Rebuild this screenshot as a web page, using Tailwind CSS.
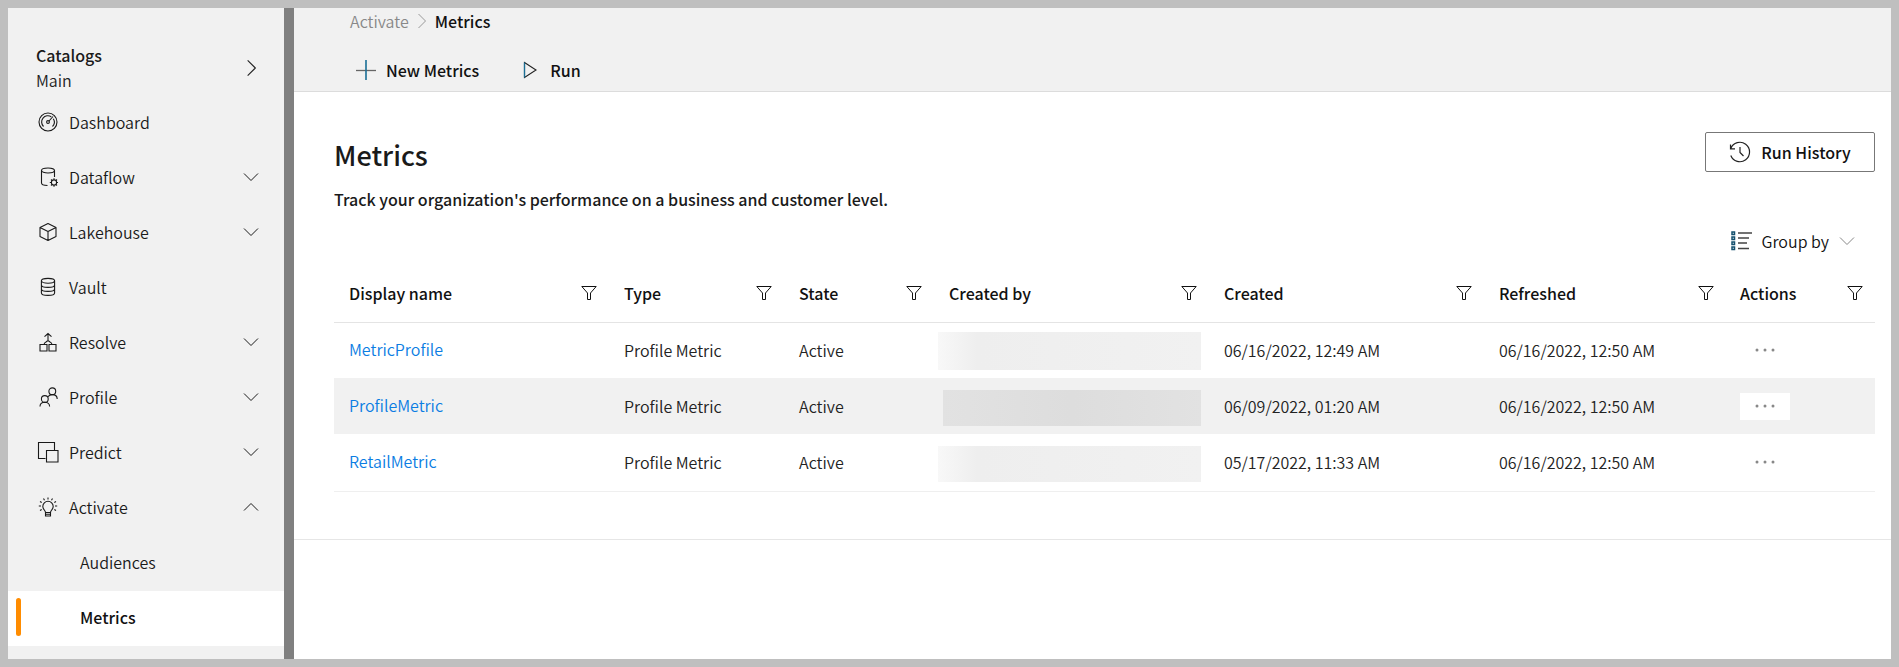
<!DOCTYPE html>
<html lang="en">
<head>
<meta charset="utf-8">
<meta name="viewport" content="width=device-width, initial-scale=1">
<title>Metrics</title>
<script src="https://cdn.jsdelivr.net/npm/@tailwindcss/browser@4"></script>
</head>
<body class="flex min-h-screen border-8 border-[#bfbfbf] bg-white font-['Noto_Sans_CJK_SC',sans-serif] text-base leading-6 font-[350] text-[#222]">

<!-- Shared icons -->
<svg class="hidden" aria-hidden="true">
  <symbol id="down" viewBox="0 0 16 10"><path d="M1 1.500l7 7 7-7" fill="none" stroke="currentColor"/></symbol>
  <symbol id="right" viewBox="0 0 10 16"><path d="M1.500 1l7 7-7 7" fill="none" stroke="currentColor"/></symbol>
  <symbol id="filter" viewBox="0 0 16 16"><path d="M.8 1.500h14.400L9.500 8v6.500h-3V8z" fill="none" stroke="currentColor"/></symbol>
  <symbol id="dots" viewBox="0 0 20 4"><g fill="currentColor"><circle cx="2" cy="2" r="1.500"/><circle cx="10" cy="2" r="1.500"/><circle cx="18" cy="2" r="1.500"/></g></symbol>
</svg>

<aside class="w-[276px] shrink-0 bg-[#f1f1f1]">
  <button type="button" class="flex h-[88px] w-full items-center justify-between pt-8 pr-[26px] pl-7 text-left leading-[25px]">
    <span><span class="block font-medium text-[#1a1a1a]">Catalogs</span><span class="block">Main</span></span>
    <svg class="mr-px h-[18px] w-[11px]"><use href="#right"/></svg>
  </button>
  <nav aria-label="Catalog" class="text-[#1a1a1a]">
    <a href="#" class="flex h-[55px] items-center gap-[11px] pr-[25px] pb-[3px] pl-[30px]">
      <svg class="size-5 shrink-0" viewBox="0 0 20 20" fill="none" stroke="currentColor" stroke-width="1.100"><circle cx="10" cy="10" r="9"/><path d="M5.500 14.500a6.300 6.300 0 0 1 7.800-9.800M15.300 6.800a6.300 6.300 0 0 1-.8 7.700M11 9l4-4.500"/><circle cx="10" cy="10" r="1.400"/></svg>
      <span>Dashboard</span>
    </a>
    <button type="button" class="flex h-[55px] w-full items-center gap-[11px] pr-[25px] pb-[3px] pl-[30px]">
      <svg class="size-5 shrink-0" viewBox="0 0 20 20" fill="none" stroke="currentColor" stroke-width="1.100"><ellipse cx="10" cy="3.500" rx="6.500" ry="2.500"/><path d="M3.500 3.500v12.500c0 1.300 2.600 2.400 6 2.500M16.500 3.500v6.500"/><circle cx="16" cy="15.500" r="2.600"/><path d="M16 11.300v1.500M16 18.200v1.500M11.800 15.500h1.500M18.700 15.500h1.500M13 12.500l1.100 1.100M17.900 17.400l1.100 1.100M13 18.500l1.100-1.100M17.900 13.600l1.100-1.100"/></svg>
      <span class="flex-1 text-left">Dataflow</span>
      <svg class="h-[10px] w-4"><use href="#down"/></svg>
    </button>
    <button type="button" class="flex h-[55px] w-full items-center gap-[11px] pr-[25px] pb-[3px] pl-[30px]">
      <svg class="size-5 shrink-0" viewBox="0 0 20 20" fill="none" stroke="currentColor" stroke-width="1.100" stroke-linejoin="round"><path d="M10 1.500l8 4v9l-8 4-8-4v-9zM2 5.500l8 4 8-4M10 9.500v9"/></svg>
      <span class="flex-1 text-left">Lakehouse</span>
      <svg class="h-[10px] w-4"><use href="#down"/></svg>
    </button>
    <a href="#" class="flex h-[55px] items-center gap-[11px] pr-[25px] pb-[3px] pl-[30px]">
      <svg class="size-5 shrink-0" viewBox="0 0 20 20" fill="none" stroke="currentColor" stroke-width="1.100"><ellipse cx="10" cy="3.800" rx="6.600" ry="2.400"/><path d="M3.400 3.800v12.200c0 1.300 3 2.400 6.600 2.400s6.600-1.100 6.600-2.400V3.800M3.400 8c0 1.300 3 2.400 6.600 2.400s6.600-1.100 6.600-2.400M3.400 12c0 1.300 3 2.400 6.600 2.400s6.600-1.100 6.600-2.400"/></svg>
      <span>Vault</span>
    </a>
    <button type="button" class="flex h-[55px] w-full items-center gap-[11px] pr-[25px] pb-[3px] pl-[30px]">
      <svg class="size-5 shrink-0" viewBox="0 0 20 20" fill="none" stroke="currentColor" stroke-width="1.100"><path d="M2 12.500h7v6.500H2zM11 12.500h7v6.500h-7zM10 1.500V8.500M6.500 4.700L10 1.500l3.500 3.200M6 12.500c.2-1.500.8-2 2-2.500l2-1.500 2 1.500c1.200.5 1.800 1 2 2.500"/></svg>
      <span class="flex-1 text-left">Resolve</span>
      <svg class="h-[10px] w-4"><use href="#down"/></svg>
    </button>
    <button type="button" class="flex h-[55px] w-full items-center gap-[11px] pr-[25px] pb-[3px] pl-[30px]">
      <svg class="size-5 shrink-0" viewBox="0 0 20 20" fill="none" stroke="currentColor" stroke-width="1.100"><circle cx="14.300" cy="4.300" r="3.400"/><circle cx="6.800" cy="12" r="3.400"/><path d="M2 19.500c0-2.500 2-4.200 4.800-4.200s4.800 1.700 4.800 4.200M10 9.800c.9-1.400 2.500-2.200 4.300-2.200 2.900 0 4.900 1.900 4.900 4.400"/></svg>
      <span class="flex-1 text-left">Profile</span>
      <svg class="h-[10px] w-4"><use href="#down"/></svg>
    </button>
    <button type="button" class="flex h-[55px] w-full items-center gap-[11px] pr-[25px] pb-[3px] pl-[30px]">
      <svg class="size-5 shrink-0 overflow-visible" viewBox="0 0 20 20" fill="none" stroke="currentColor" stroke-width="1.100"><path d="M7.500 16.500h-7v-16h16v7.500M8.500 8.500h11.500v11.500H8.500z"/></svg>
      <span class="flex-1 text-left">Predict</span>
      <svg class="h-[10px] w-4"><use href="#down"/></svg>
    </button>
    <button type="button" aria-expanded="true" class="flex h-[55px] w-full items-center gap-[11px] pr-[25px] pb-[3px] pl-[30px]">
      <svg class="size-5 shrink-0" viewBox="0 0 20 20" fill="none" stroke="currentColor" stroke-width="1.100"><path d="M7.500 15.500c0-2-2.700-3.200-2.700-6a5.200 5.200 0 0 1 10.400 0c0 2.800-2.700 4-2.700 6zM7.500 15.500v3.500h5v-3.500M7.500 17.300h5M10 .5v2M5.500 1.500l1 1.700M14.500 1.500l-1 1.700M2 4.500l1.700 1M18 4.500l-1.700 1M.8 9h2.200M17 9h2.200M2 13.500l1.700-1M18 13.500l-1.700-1"/></svg>
      <span class="flex-1 text-left">Activate</span>
      <svg class="h-[10px] w-4 rotate-180"><use href="#down"/></svg>
    </button>
    <a href="#" class="flex h-[55px] items-center pb-[3px] pl-[72px]">Audiences</a>
    <a href="#" aria-current="page" class="flex h-[55px] items-center bg-white pb-[3px] pl-2 font-medium text-[#111]">
      <span class="mr-[59px] h-[38px] w-[5px] rounded-sm bg-[#ff8c00]"></span>Metrics
    </a>
  </nav>
</aside>
<div class="w-[10px] shrink-0 bg-[#808080]"></div>

<main class="min-w-0 flex-1">
  <header class="h-[84px] border-b border-[#dcdcdc] bg-[#f1f1f1] pl-14">
    <nav aria-label="Breadcrumb" class="flex items-center gap-2 pt-px">
      <a href="#" class="text-[#888]">Activate</a>
      <svg class="h-4 w-[10px] text-[#999]"><use href="#right"/></svg>
      <span class="font-medium text-[#111]">Metrics</span>
    </nav>
    <div class="mt-[25px] flex items-center gap-[43px] pl-1.5 font-medium text-[#111]">
      <button type="button" class="flex items-center gap-2.5">
        <svg class="size-5" viewBox="0 0 20 20"><path d="M0 10.500h20" stroke="#666" stroke-width="1.300"/><path d="M10 0v20" stroke="#1a6f96" stroke-width="1.600"/></svg>New Metrics
      </button>
      <button type="button" class="flex items-center gap-3">
        <svg class="h-[18px] w-4" viewBox="0 0 16 18" fill="none"><path d="M2.500 1.500L14 9 2.500 16.500z" stroke="#222" stroke-width="1.100"/><path d="M2.500 1.500v15" stroke="#1a6f96" stroke-width="1.300"/></svg>Run
      </button>
    </div>
  </header>

  <section class="border-b border-[#e6e6e6] pt-10 pr-4 pb-[47px] pl-10">
    <div class="flex items-start justify-between">
      <div>
        <h1 class="mt-[3px] text-[27px] leading-10 font-medium text-[#1a1a1a]">Metrics</h1>
        <p class="mt-3 font-medium text-[#1a1a1a]">Track your organization's performance on a business and customer level.</p>
      </div>
      <button type="button" class="flex h-10 w-[170px] items-center justify-center gap-2.5 rounded-xs border border-[#777] font-medium text-[#111]">
        <svg class="size-[22px]" viewBox="0 0 22 22" fill="none" stroke="#222" stroke-width="1.200"><path d="M1.800 7.500A9.700 9.700 0 1 1 1.800 14.500M1.500 3.500v4.300h4.500M11 6v5.500l3.500 3.500"/></svg>Run History
      </button>
    </div>
    <div class="mt-[18px] flex justify-end pr-5">
      <button type="button" class="flex items-center gap-2.5 text-[#111]">
        <svg class="h-5 w-[21px]" viewBox="0 0 21 20" fill="none"><path d="M7 2h14M7 7h11M7 12h9M7 17.500h11" stroke="#444" stroke-width="1.300"/><path d="M1 1h2.500v2.500H1zM1 6h2.500v2.500H1zM1 11h2.500v2.500H1zM1 16h2.500v2.500H1z" stroke="#14506e" stroke-width="1.500"/></svg>
        Group by
        <svg class="h-[10px] w-4 text-[#888]"><use href="#down"/></svg>
      </button>
    </div>
    <table class="mt-3 w-full table-fixed text-left">
      <colgroup><col class="w-[275px]"><col class="w-[175px]"><col class="w-[150px]"><col class="w-[275px]"><col class="w-[275px]"><col class="w-[242px]"><col class="w-[149px]"></colgroup>
      <thead class="text-[#111]">
        <tr class="h-[57px] border-b border-[#e4e4e4]">
          <th scope="col" class="pr-3 pl-[15px] font-medium"><div class="flex items-center justify-between">Display name<button type="button" aria-label="Filter Display name"><svg class="size-4"><use href="#filter"/></svg></button></div></th>
          <th scope="col" class="pr-3 pl-[15px] font-medium"><div class="flex items-center justify-between">Type<button type="button" aria-label="Filter Type"><svg class="size-4"><use href="#filter"/></svg></button></div></th>
          <th scope="col" class="pr-3 pl-[15px] font-medium"><div class="flex items-center justify-between">State<button type="button" aria-label="Filter State"><svg class="size-4"><use href="#filter"/></svg></button></div></th>
          <th scope="col" class="pr-3 pl-[15px] font-medium"><div class="flex items-center justify-between">Created by<button type="button" aria-label="Filter Created by"><svg class="size-4"><use href="#filter"/></svg></button></div></th>
          <th scope="col" class="pr-3 pl-[15px] font-medium"><div class="flex items-center justify-between">Created<button type="button" aria-label="Filter Created"><svg class="size-4"><use href="#filter"/></svg></button></div></th>
          <th scope="col" class="pr-3 pl-[15px] font-medium"><div class="flex items-center justify-between">Refreshed<button type="button" aria-label="Filter Refreshed"><svg class="size-4"><use href="#filter"/></svg></button></div></th>
          <th scope="col" class="pr-3 pl-[14px] font-medium"><div class="flex items-center justify-between">Actions<button type="button" aria-label="Filter Actions"><svg class="size-4"><use href="#filter"/></svg></button></div></th>
        </tr>
      </thead>
      <tbody>
        <tr class="h-14">
          <td class="pb-0.5 pl-[15px]"><a href="#" class="text-[#0b7de3]">MetricProfile</a></td>
          <td class="pl-[15px]">Profile Metric</td>
          <td class="pl-[15px]">Active</td>
          <td class="pt-px pr-2 pl-1"><div class="h-[38px] bg-linear-to-r from-[#f8f8f8] via-[#eeeeee] via-15% to-[#f1f1f1]"></div></td>
          <td class="pl-[15px]">06/16/2022, 12:49 AM</td>
          <td class="pl-[15px]">06/16/2022, 12:50 AM</td>
          <td class="pl-[14px]"><button type="button" aria-label="More actions for MetricProfile" class="flex h-[27px] w-[50px] items-center justify-center text-[#888]"><svg class="h-1 w-5"><use href="#dots"/></svg></button></td>
        </tr>
        <tr class="h-14 bg-[#f1f1f1]">
          <td class="pb-0.5 pl-[15px]"><a href="#" class="text-[#0b7de3]">ProfileMetric</a></td>
          <td class="pl-[15px]">Profile Metric</td>
          <td class="pl-[15px]">Active</td>
          <td class="pt-2 pr-2 pb-1 pl-[9px]"><div class="h-9 bg-linear-to-r from-[#e2e2e2] via-[#dddddd] via-50% to-[#e2e2e2]"></div></td>
          <td class="pl-[15px]">06/09/2022, 01:20 AM</td>
          <td class="pl-[15px]">06/16/2022, 12:50 AM</td>
          <td class="pl-[14px]"><button type="button" aria-label="More actions for ProfileMetric" class="flex h-[27px] w-[50px] items-center justify-center bg-white text-[#888]"><svg class="h-1 w-5"><use href="#dots"/></svg></button></td>
        </tr>
        <tr class="h-[57px] border-b border-[#efefef]">
          <td class="pb-0.5 pl-[15px]"><a href="#" class="text-[#0b7de3]">RetailMetric</a></td>
          <td class="pl-[15px]">Profile Metric</td>
          <td class="pl-[15px]">Active</td>
          <td class="pt-1 pr-2 pl-1"><div class="h-9 bg-linear-to-r from-[#f8f8f8] via-[#eeeeee] via-15% to-[#f1f1f1]"></div></td>
          <td class="pl-[15px]">05/17/2022, 11:33 AM</td>
          <td class="pl-[15px]">06/16/2022, 12:50 AM</td>
          <td class="pl-[14px]"><button type="button" aria-label="More actions for RetailMetric" class="flex h-[27px] w-[50px] items-center justify-center text-[#888]"><svg class="h-1 w-5"><use href="#dots"/></svg></button></td>
        </tr>
      </tbody>
    </table>
  </section>
</main>
</body>
</html>
